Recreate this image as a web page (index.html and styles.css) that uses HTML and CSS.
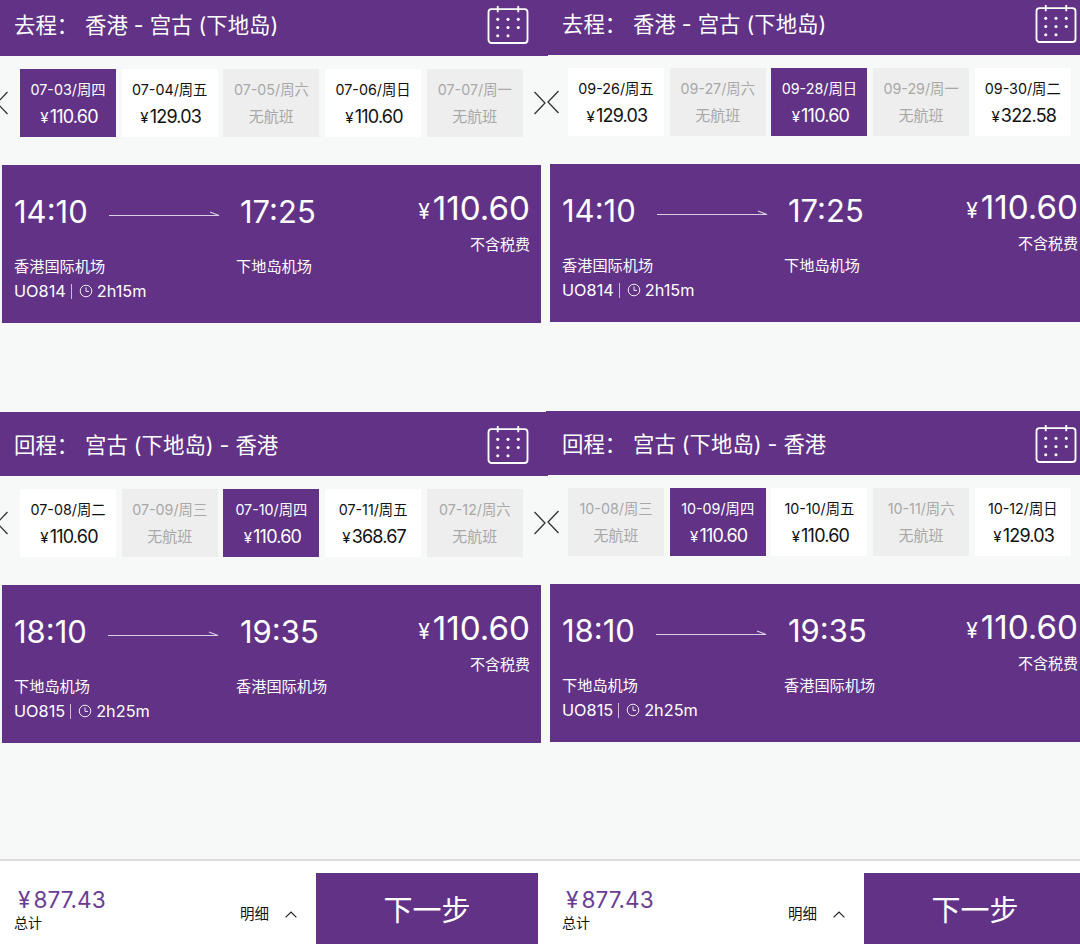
FILE: index.html
```html
<!DOCTYPE html>
<html lang="zh-CN">
<head>
  <meta charset="UTF-8">
  <title>选择航班</title>
  <link rel="stylesheet" href="styles.css">
</head>
<body>

<svg class="defs" width="0" height="0">
  <symbol id="cal" viewBox="0 0 42 38">
    <path d="M5 4h32a3 3 0 0 1 3 3v27a3 3 0 0 1-3 3H5a3 3 0 0 1-3-3V7a3 3 0 0 1 3-3zM11 1v6M31 1v6" fill="none" stroke="#fff" stroke-width="1.8"/>
    <g fill="#fff">
      <circle cx="11" cy="14" r="1.5"/><circle cx="21" cy="14" r="1.5"/><circle cx="31" cy="14" r="1.5"/>
      <circle cx="11" cy="22" r="1.5"/><circle cx="21" cy="22" r="1.5"/><circle cx="31" cy="22" r="1.5"/>
      <circle cx="11" cy="30" r="1.5"/><circle cx="21" cy="30" r="1.5"/>
    </g>
  </symbol>
  <symbol id="clock" viewBox="0 0 14 14">
    <circle cx="7" cy="7" r="5.8" fill="none" stroke="#fff" stroke-width="0.9"/>
    <path d="M7 3.4V7.4H10" fill="none" stroke="#fff" stroke-width="0.9"/>
  </symbol>
  <symbol id="flyarrow" viewBox="0 0 112 8">
    <path d="M0 5.5H110L101 2" fill="none" stroke="#d9cfe2" stroke-width="1.2"/>
  </symbol>
  <symbol id="prev" viewBox="0 0 12 24">
    <path d="M11.5 1L1 12L11.5 23" fill="none" stroke="#333" stroke-width="1.3"/>
  </symbol>
  <symbol id="next" viewBox="0 0 12 24">
    <path d="M.5 1L11 12L.5 23" fill="none" stroke="#333" stroke-width="1.3"/>
  </symbol>
</svg>

<div class="screens">

  <!-- 左边一屏 -->
  <div class="pane">
    <section class="leg">
      <div class="leg-head">
        <span class="leg-kind">去程：</span><span>香港 - 宫古 (下地岛)</span>
        <svg class="cal"><use href="#cal"/></svg>
      </div>
      <div class="dates dates--cut">
        <svg class="nav"><use href="#prev"/></svg>
        <div class="day day--on"><b>07-03/周四</b><i><em>¥</em>110.60</i></div>
        <div class="day"><b>07-04/周五</b><i><em>¥</em>129.03</i></div>
        <div class="day day--off"><b>07-05/周六</b><i>无航班</i></div>
        <div class="day"><b>07-06/周日</b><i><em>¥</em>110.60</i></div>
        <div class="day day--off"><b>07-07/周一</b><i>无航班</i></div>
        <svg class="nav"><use href="#next"/></svg>
      </div>
      <div class="flight">
        <div class="route">
          <div class="time-row"><span class="time">14:10</span><svg class="fly"><use href="#flyarrow"/></svg></div>
          <div class="time time--to">17:25</div>
          <div class="port">香港国际机场</div>
          <div class="port">下地岛机场</div>
          <div class="meta">UO814<span class="pipe"></span><svg class="clock"><use href="#clock"/></svg>2h15m</div>
        </div>
        <div class="fare">
          <div class="fare-num"><em>¥</em>110.60</div>
          <div class="fare-note">不含税费</div>
        </div>
      </div>
    </section>

    <section class="leg">
      <div class="leg-head">
        <span class="leg-kind">回程：</span><span>宫古 (下地岛) - 香港</span>
        <svg class="cal"><use href="#cal"/></svg>
      </div>
      <div class="dates dates--cut">
        <svg class="nav"><use href="#prev"/></svg>
        <div class="day"><b>07-08/周二</b><i><em>¥</em>110.60</i></div>
        <div class="day day--off"><b>07-09/周三</b><i>无航班</i></div>
        <div class="day day--on"><b>07-10/周四</b><i><em>¥</em>110.60</i></div>
        <div class="day"><b>07-11/周五</b><i><em>¥</em>368.67</i></div>
        <div class="day day--off"><b>07-12/周六</b><i>无航班</i></div>
        <svg class="nav"><use href="#next"/></svg>
      </div>
      <div class="flight">
        <div class="route">
          <div class="time-row"><span class="time">18:10</span><svg class="fly"><use href="#flyarrow"/></svg></div>
          <div class="time time--to">19:35</div>
          <div class="port">下地岛机场</div>
          <div class="port">香港国际机场</div>
          <div class="meta">UO815<span class="pipe"></span><svg class="clock"><use href="#clock"/></svg>2h25m</div>
        </div>
        <div class="fare">
          <div class="fare-num"><em>¥</em>110.60</div>
          <div class="fare-note">不含税费</div>
        </div>
      </div>
    </section>

    <div class="bottom">
      <div class="total">
        <div class="total-num"><em>¥</em>877.43</div>
        <div class="total-label">总计</div>
      </div>
      <div class="detail">明细<svg class="up" viewBox="0 0 12 7"><path d="M.6 6.4L6 1L11.4 6.4" fill="none" stroke="#222" stroke-width="1.2"/></svg></div>
      <div class="next-btn">下一步</div>
    </div>
  </div>

  <!-- 右边一屏 -->
  <div class="pane pane--right">
    <section class="leg">
      <div class="leg-head">
        <span class="leg-kind">去程：</span><span>香港 - 宫古 (下地岛)</span>
        <svg class="cal"><use href="#cal"/></svg>
      </div>
      <div class="dates">
        <svg class="nav"><use href="#prev"/></svg>
        <div class="day"><b>09-26/周五</b><i><em>¥</em>129.03</i></div>
        <div class="day day--off"><b>09-27/周六</b><i>无航班</i></div>
        <div class="day day--on"><b>09-28/周日</b><i><em>¥</em>110.60</i></div>
        <div class="day day--off"><b>09-29/周一</b><i>无航班</i></div>
        <div class="day"><b>09-30/周二</b><i><em>¥</em>322.58</i></div>
      </div>
      <div class="flight">
        <div class="route">
          <div class="time-row"><span class="time">14:10</span><svg class="fly"><use href="#flyarrow"/></svg></div>
          <div class="time time--to">17:25</div>
          <div class="port">香港国际机场</div>
          <div class="port">下地岛机场</div>
          <div class="meta">UO814<span class="pipe"></span><svg class="clock"><use href="#clock"/></svg>2h15m</div>
        </div>
        <div class="fare">
          <div class="fare-num"><em>¥</em>110.60</div>
          <div class="fare-note">不含税费</div>
        </div>
      </div>
    </section>

    <section class="leg">
      <div class="leg-head">
        <span class="leg-kind">回程：</span><span>宫古 (下地岛) - 香港</span>
        <svg class="cal"><use href="#cal"/></svg>
      </div>
      <div class="dates">
        <svg class="nav"><use href="#prev"/></svg>
        <div class="day day--off"><b>10-08/周三</b><i>无航班</i></div>
        <div class="day day--on"><b>10-09/周四</b><i><em>¥</em>110.60</i></div>
        <div class="day"><b>10-10/周五</b><i><em>¥</em>110.60</i></div>
        <div class="day day--off"><b>10-11/周六</b><i>无航班</i></div>
        <div class="day"><b>10-12/周日</b><i><em>¥</em>129.03</i></div>
      </div>
      <div class="flight">
        <div class="route">
          <div class="time-row"><span class="time">18:10</span><svg class="fly"><use href="#flyarrow"/></svg></div>
          <div class="time time--to">19:35</div>
          <div class="port">下地岛机场</div>
          <div class="port">香港国际机场</div>
          <div class="meta">UO815<span class="pipe"></span><svg class="clock"><use href="#clock"/></svg>2h25m</div>
        </div>
        <div class="fare">
          <div class="fare-num"><em>¥</em>110.60</div>
          <div class="fare-note">不含税费</div>
        </div>
      </div>
    </section>

    <div class="bottom">
      <div class="total">
        <div class="total-num"><em>¥</em>877.43</div>
        <div class="total-label">总计</div>
      </div>
      <div class="detail">明细<svg class="up" viewBox="0 0 12 7"><path d="M.6 6.4L6 1L11.4 6.4" fill="none" stroke="#222" stroke-width="1.2"/></svg></div>
      <div class="next-btn">下一步</div>
    </div>
  </div>

</div>

</body>
</html>
```

FILE: styles.css
```css
* {
  box-sizing: border-box;
}
html, body {
  margin: 0;
  height: 944px;
  overflow: hidden;
}
body {
  font-family: Inter, "Noto Sans CJK SC", sans-serif;
  background-color: #f7f8f8;
  color: #111;
}
em, i {
  font-style: normal;
}
.defs {
  display: block;
  height: 0;
}
.screens {
  display: grid;
  grid-template-columns: 548px 532px;
  height: 944px;
  overflow: hidden;
}
.pane {
  width: 548px;
  height: 952px;
  margin-top: -8px;
  display: flex;
  flex-direction: column;
}
.pane--right {
  margin-top: -9px;
  height: 953px;
}
.pane--right .leg-head {
  margin-left: -2px;
  padding-left: 16px;
}
.leg {
  margin-bottom: 89px;
}
.leg:nth-of-type(2) {
  margin-bottom: 0;
}
.leg-head {
  height: 64px;
  padding-left: 14px;
  padding-top: 1px;
  display: flex;
  align-items: center;
  background-color: #623287;
  color: #fff;
  font-size: 21.4px;
  line-height: 30px;
}
.leg-kind {
  width: 71px;
}
.cal {
  width: 44px;
  height: 39px;
  margin-left: auto;
  margin-right: 18px;
}
.dates {
  height: 68px;
  margin-top: 13px;
  padding-left: 20px;
  display: flex;
  gap: 5.7px;
  position: relative;
}
.nav {
  position: absolute;
  top: 22px;
  left: -1px;
  width: 12px;
  height: 24px;
}
.dates--cut .nav:first-child {
  left: -4px;
}
.dates .nav:last-child {
  left: 534px;
}
.day {
  width: 96px;
  height: 68px;
  background-color: #fff;
  text-align: center;
  padding-top: 11px;
}
.day b {
  display: block;
  font-weight: 400;
  font-size: 14.3px;
  line-height: 20px;
}
.day i {
  display: block;
  margin-top: 6px;
  padding-left: 2px;
  font-size: 18px;
  line-height: 22px;
  letter-spacing: -0.8px;
}
.day em {
  font-size: 15px;
  margin-right: 2px;
}
.day--on {
  background-color: #623287;
  color: #fff;
}
.day--off {
  background-color: #eeeeee;
  color: #a8a8a8;
}
.day--off i {
  padding-left: 0;
  font-size: 15px;
  letter-spacing: 0;
}
.flight {
  height: 158px;
  margin: 28px 0 0 2px;
  width: 539px;
  padding: 26px 11px 0 12px;
  display: flex;
  justify-content: space-between;
  background-color: #623287;
  color: #fff;
}
.route {
  display: grid;
  grid-template-columns: 222px 120px;
  grid-template-rows: 42px 46px 24px;
  align-items: center;
}
.time-row {
  display: flex;
  align-items: center;
}
.time {
  font-size: 31px;
  line-height: 42px;
}
.time--to {
  padding-left: 4px;
}
.fly {
  width: 112px;
  height: 8px;
  margin: 4px 0 0 21px;
}
.port {
  font-size: 15.2px;
  line-height: 22px;
  padding-top: 22px;
}
.meta {
  grid-column: 1 / 3;
  display: flex;
  align-items: center;
  font-size: 16.3px;
  line-height: 24px;
}
.pipe {
  width: 1px;
  height: 15px;
  margin: 0 7px 0 5px;
  background-color: #cbbbd8;
}
.clock {
  width: 14px;
  height: 14px;
  margin-right: 4px;
}
.fare {
  text-align: right;
  margin-top: -1px;
}
.fare-num {
  font-size: 33.2px;
  line-height: 36px;
}
.fare-num em {
  font-size: 21px;
  margin-right: 3px;
  position: relative;
  top: -1px;
}
.fare-note {
  margin-top: 3px;
  font-size: 15px;
  line-height: 22px;
}
.bottom {
  margin-top: auto;
  height: 85px;
  border-top: 2px solid #dddddd;
  background-color: #fff;
  display: flex;
  align-items: flex-start;
}
.total {
  width: 240px;
  padding: 25px 0 0 14px;
}
.total-num {
  color: #6a3d94;
  font-size: 22.6px;
  line-height: 28px;
  padding-left: 4px;
}
.total-num em {
  margin-right: 3px;
}
.total-label {
  font-size: 14px;
  line-height: 18px;
}
.detail {
  width: 76px;
  margin-top: 42px;
  display: flex;
  align-items: center;
  font-size: 14.5px;
  line-height: 22px;
}
.up {
  width: 12px;
  height: 7px;
  margin-left: 16px;
}
.next-btn {
  width: 222px;
  height: 71px;
  margin-top: 12px;
  padding-top: 2px;
  background-color: #623287;
  color: #fff;
  font-size: 29px;
  line-height: 71px;
  text-align: center;
}
```
